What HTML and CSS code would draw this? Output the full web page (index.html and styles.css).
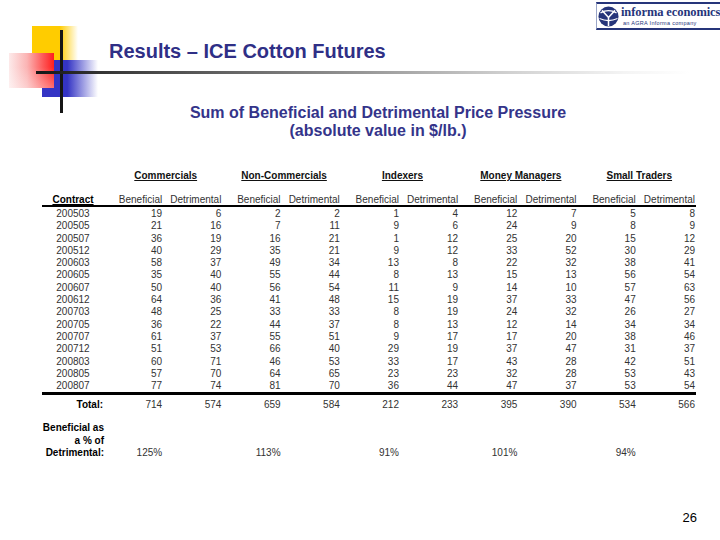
FILE: index.html
```html
<!DOCTYPE html>
<html lang="en">
<head>
<meta charset="utf-8">
<title>Results – ICE Cotton Futures</title>
<link rel="stylesheet" href="styles.css">
</head>
<body>
<div class="slide">
  <div class="deco" aria-hidden="true">
    <div class="sq-yellow"></div>
    <div class="sq-blue"></div>
    <div class="sq-red"></div>
    <div class="rule-v"></div>
    <div class="rule-h"></div>
  </div>

  <header class="topbar">
    <div class="logo">
      <svg class="globe" viewBox="0 0 22 22" width="21" height="21">
        <circle cx="11" cy="11" r="10.5" fill="#26357a"/>
        <path d="M2.6 7.2 Q11 2.6 19.4 7.2" stroke="#fff" stroke-width="1.3" fill="none"/>
        <path d="M4.2 4.6 L11 12 L17.8 4.6" stroke="#fff" stroke-width="1.6" fill="none"/>
        <path d="M11 12 V21" stroke="#fff" stroke-width="1.6"/>
        <path d="M1.6 13.2 Q11 17.4 20.4 13.2" stroke="#fff" stroke-width="1.1" fill="none"/>
      </svg>
      <div class="logo-text">
        <div class="brand">informa economics</div>
        <div class="tag">an AGRA Informa company</div>
      </div>
    </div>
  </header>

  <h1 class="title">Results – ICE Cotton Futures</h1>
  <h2 class="subtitle">Sum of Beneficial and Detrimental Price Pressure<br>(absolute value in $/lb.)</h2>

  <table class="data">
    <colgroup>
      <col class="c-contract">
      <col span="10" class="c-val">
    </colgroup>
    <thead>
      <tr class="groups">
        <th></th>
        <th colspan="2"><span>Commercials</span></th>
        <th colspan="2"><span>Non-Commercials</span></th>
        <th colspan="2"><span>Indexers</span></th>
        <th colspan="2"><span>Money Managers</span></th>
        <th colspan="2"><span>Small Traders</span></th>
      </tr>
      <tr class="cols">
        <th class="contract"><span>Contract</span></th>
        <th>Beneficial</th><th>Detrimental</th>
        <th>Beneficial</th><th>Detrimental</th>
        <th>Beneficial</th><th>Detrimental</th>
        <th>Beneficial</th><th>Detrimental</th>
        <th>Beneficial</th><th>Detrimental</th>
      </tr>
    </thead>
    <tbody>
      <tr><td>200503</td><td>19</td><td>6</td><td>2</td><td>2</td><td>1</td><td>4</td><td>12</td><td>7</td><td>5</td><td>8</td></tr>
      <tr><td>200505</td><td>21</td><td>16</td><td>7</td><td>11</td><td>9</td><td>6</td><td>24</td><td>9</td><td>8</td><td>9</td></tr>
      <tr><td>200507</td><td>36</td><td>19</td><td>16</td><td>21</td><td>1</td><td>12</td><td>25</td><td>20</td><td>15</td><td>12</td></tr>
      <tr><td>200512</td><td>40</td><td>29</td><td>35</td><td>21</td><td>9</td><td>12</td><td>33</td><td>52</td><td>30</td><td>29</td></tr>
      <tr><td>200603</td><td>58</td><td>37</td><td>49</td><td>34</td><td>13</td><td>8</td><td>22</td><td>32</td><td>38</td><td>41</td></tr>
      <tr><td>200605</td><td>35</td><td>40</td><td>55</td><td>44</td><td>8</td><td>13</td><td>15</td><td>13</td><td>56</td><td>54</td></tr>
      <tr><td>200607</td><td>50</td><td>40</td><td>56</td><td>54</td><td>11</td><td>9</td><td>14</td><td>10</td><td>57</td><td>63</td></tr>
      <tr><td>200612</td><td>64</td><td>36</td><td>41</td><td>48</td><td>15</td><td>19</td><td>37</td><td>33</td><td>47</td><td>56</td></tr>
      <tr><td>200703</td><td>48</td><td>25</td><td>33</td><td>33</td><td>8</td><td>19</td><td>24</td><td>32</td><td>26</td><td>27</td></tr>
      <tr><td>200705</td><td>36</td><td>22</td><td>44</td><td>37</td><td>8</td><td>13</td><td>12</td><td>14</td><td>34</td><td>34</td></tr>
      <tr><td>200707</td><td>61</td><td>37</td><td>55</td><td>51</td><td>9</td><td>17</td><td>17</td><td>20</td><td>38</td><td>46</td></tr>
      <tr><td>200712</td><td>51</td><td>53</td><td>66</td><td>40</td><td>29</td><td>19</td><td>37</td><td>47</td><td>31</td><td>37</td></tr>
      <tr><td>200803</td><td>60</td><td>71</td><td>46</td><td>53</td><td>33</td><td>17</td><td>43</td><td>28</td><td>42</td><td>51</td></tr>
      <tr><td>200805</td><td>57</td><td>70</td><td>64</td><td>65</td><td>23</td><td>23</td><td>32</td><td>28</td><td>53</td><td>43</td></tr>
      <tr><td>200807</td><td>77</td><td>74</td><td>81</td><td>70</td><td>36</td><td>44</td><td>47</td><td>37</td><td>53</td><td>54</td></tr>
    </tbody>
    <tfoot>
      <tr class="total">
        <th>Total:</th>
        <td>714</td><td>574</td><td>659</td><td>584</td><td>212</td><td>233</td><td>395</td><td>390</td><td>534</td><td>566</td>
      </tr>
      <tr class="pct">
        <th>Beneficial as<br>a % of<br>Detrimental:</th>
        <td>125%</td><td></td><td>113%</td><td></td><td>91%</td><td></td><td>101%</td><td></td><td>94%</td><td></td>
      </tr>
    </tfoot>
  </table>

  <footer class="pageno">26</footer>
</div>
</body>
</html>
```

FILE: styles.css
```css
* { box-sizing: border-box; }

html, body {
  margin: 0;
  padding: 0;
  background: #ffffff;
}

body {
  font-family: "Liberation Sans", Arial, sans-serif;
  color: #000;
}

.slide {
  position: relative;
  width: 720px;
  height: 540px;
  overflow: hidden;
  display: flex;
  flex-direction: column;
}

/* corner decoration */
.deco {
  position: absolute;
  left: 0;
  top: 0;
  width: 720px;
  height: 120px;
  pointer-events: none;
}
.sq-yellow {
  position: absolute;
  left: 32px;
  top: 26px;
  width: 46px;
  height: 34px;
  background: linear-gradient(to right, #ffcc00 0%, #ffcc00 60%, rgba(255, 204, 0, 0) 100%);
}
.sq-blue {
  position: absolute;
  left: 42px;
  top: 60px;
  width: 56px;
  height: 37px;
  background: linear-gradient(to right, #3434c4 0%, #3434c4 45%, rgba(52, 52, 196, 0) 100%);
}
.sq-red {
  position: absolute;
  left: 9px;
  top: 53px;
  width: 45px;
  height: 35px;
  background:
    linear-gradient(to top, rgba(255, 255, 255, 0.35), rgba(255, 255, 255, 0) 60%),
    linear-gradient(to right, #fdeaea 0%, #fbb4b4 40%, #fd5a5a 75%, #ff1e1e 100%);
}
.rule-v {
  position: absolute;
  left: 60px;
  top: 30px;
  width: 3px;
  height: 83px;
  background: #161616;
}
.rule-h {
  position: absolute;
  left: 36px;
  top: 71px;
  width: 654px;
  height: 3px;
  background: linear-gradient(to right, #161616 0%, #3a3a3a 12%, #8a8a8a 45%, #d0d0d0 72%, #f4f4f4 90%, #ffffff 100%);
}

/* logo */
.topbar {
  display: flex;
  justify-content: flex-end;
  padding-top: 2px;
  position: relative;
}
.logo {
  width: 124px;
  height: 28px;
  border-top: 2px solid #26357a;
  border-bottom: 2px solid #26357a;
  border-left: 1px solid #9aa6c8;
  display: flex;
  align-items: center;
  gap: 2px;
  padding-left: 1px;
}
.globe { flex: none; display: block; }
.logo-text {
  display: flex;
  flex-direction: column;
  line-height: 1;
}
.brand {
  font-family: "Liberation Serif", "Times New Roman", serif;
  font-weight: bold;
  font-size: 12.5px;
  color: #26357a;
  letter-spacing: -0.1px;
  white-space: nowrap;
}
.tag {
  font-family: "Liberation Sans", Arial, sans-serif;
  font-size: 5.5px;
  color: #26357a;
  margin-top: 2px;
  padding-left: 2px;
  letter-spacing: 0.3px;
  white-space: nowrap;
}

/* headings */
.title {
  position: relative;
  margin: 9px 0 0 109px;
  font-size: 20px;
  line-height: 24px;
  font-weight: bold;
  color: #2f2f86;
}
.subtitle {
  margin: 41px 0 0 0;
  padding-left: 36px;
  text-align: center;
  font-size: 16px;
  line-height: 18px;
  font-weight: bold;
  color: #34348a;
}

/* table */
.data {
  margin: 30px 0 0 42px;
  width: 654px;
  table-layout: fixed;
  border-collapse: separate;
  border-spacing: 0;
  font-size: 10px;
}
.c-contract { width: 62px; }
.c-val { width: 59.2px; }

.data th, .data td {
  padding: 0 1px 0 0;
  white-space: nowrap;
}

.groups th {
  font-weight: bold;
  text-align: center;
  line-height: 12px;
  padding: 0 0 12px 5px;
  color: #111;
}
.groups th span {
  text-decoration: underline;
  text-underline-offset: 1px;
}

.cols th {
  font-weight: normal;
  text-align: right;
  line-height: 11px;
  border-bottom: 2px solid #000;
  color: #333;
}
.cols th.contract {
  text-align: center;
  font-weight: bold;
  padding: 0;
  color: #000;
}
.cols th.contract span {
  text-decoration: underline;
  text-decoration-thickness: 2px;
  text-underline-offset: 1px;
}

tbody td {
  line-height: 12.3px;
  height: 12.3px;
  text-align: right;
  color: #333;
}
tbody td:first-child {
  text-align: center;
  padding: 0;
}
tbody tr:first-child td {
  padding-top: 1px;
  height: 13.3px;
}

.total th, .total td {
  border-top: 3px solid #000;
  padding-top: 4px;
  line-height: 12px;
}
.total th {
  text-align: right;
  font-weight: bold;
}
.total td {
  text-align: right;
  color: #333;
}

.pct th {
  text-align: right;
  font-weight: bold;
  line-height: 12.5px;
  padding: 11px 0 0 0;
}
.pct td {
  vertical-align: bottom;
  text-align: right;
  line-height: 12.5px;
  color: #333;
}

/* page number */
.pageno {
  margin-top: auto;
  text-align: right;
  padding: 0 23px 15px 0;
  font-size: 13px;
  line-height: 15px;
}
```
